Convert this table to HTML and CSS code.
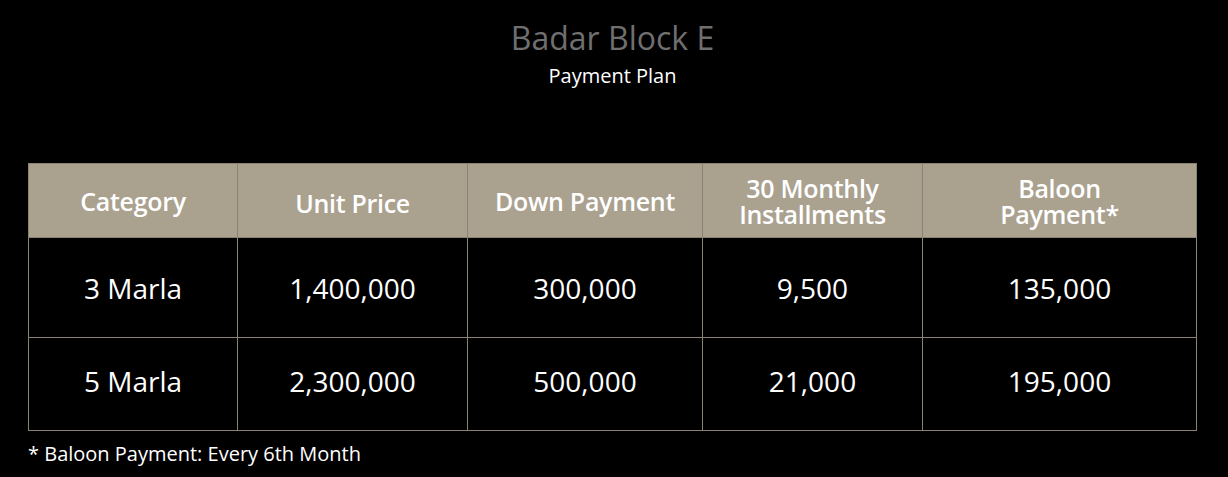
FILE: index.html
```html
<!DOCTYPE html>
<html lang="en">
<head>
<meta charset="utf-8">
<title>Badar Block E - Payment Plan</title>
<link rel="stylesheet" href="styles.css">
</head>
<body>
<main class="page">
  <header class="heading">
    <h1 class="title">Badar Block E</h1>
    <p class="subtitle">Payment Plan</p>
  </header>
  <table class="plan">
    <colgroup>
      <col class="c1"><col class="c2"><col class="c3"><col class="c4"><col class="c5">
    </colgroup>
    <thead>
      <tr>
        <th>Category</th>
        <th class="low">Unit Price</th>
        <th>Down Payment</th>
        <th>30 Monthly<br>Installments</th>
        <th>Baloon<br>Payment*</th>
      </tr>
    </thead>
    <tbody>
      <tr class="r1">
        <td>3 Marla</td><td>1,400,000</td><td>300,000</td><td>9,500</td><td>135,000</td>
      </tr>
      <tr class="r2">
        <td>5 Marla</td><td>2,300,000</td><td>500,000</td><td>21,000</td><td>195,000</td>
      </tr>
    </tbody>
  </table>
  <p class="note">* Baloon Payment: Every 6th Month</p>
</main>
</body>
</html>
```

FILE: styles.css
```css
html, body {
  margin: 0;
  padding: 0;
  background: #000;
}
body {
  font-family: "Open Sans", "Lato", sans-serif;
  color: #fff;
}
.page {
  padding: 0 31px 0 28px;
}
.heading {
  text-align: center;
  padding-top: 16px;
}
.title {
  margin: 0;
  font-size: 32px;
  font-weight: 400;
  color: #6f6f6f;
  line-height: 44px;
}
.subtitle {
  margin: 3px 0 0;
  font-size: 20px;
  line-height: 26px;
  color: #fff;
}
.plan {
  margin-top: 74px;
  width: 100%;
  border-collapse: collapse;
  table-layout: fixed;
  text-align: center;
}
.c1 { width: 209px; }
.c2 { width: 230px; }
.c3 { width: 235px; }
.c4 { width: 220px; }
.plan th, .plan td {
  border: 1px solid #8a8372;
  padding: 0;
}
.plan thead tr {
  background: #aaa18f;
  height: 74px;
}
.plan th {
  font-size: 25px;
  font-weight: 600;
  line-height: 26px;
  color: #fff;
  letter-spacing: -0.3px;
}
.plan th.low {
  padding-top: 4px;
}
.plan .r1 { height: 100px; }
.plan .r2 { height: 93px; }
.plan .r2 td { padding-bottom: 6px; }
.plan td {
  font-size: 28px;
  font-weight: 400;
}
.note {
  margin: 10px 0 0;
  font-size: 20px;
  line-height: 26px;
}
```
